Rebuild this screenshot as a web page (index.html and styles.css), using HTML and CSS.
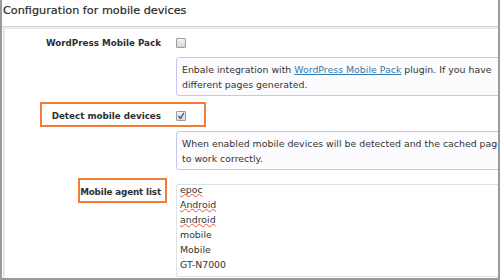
FILE: index.html
```html
<!DOCTYPE html>
<html>
<head>
<meta charset="utf-8">
<link rel="stylesheet" href="styles.css">
</head>
<body>
<div class="frame">
  <div class="title">Configuration for mobile devices</div>
  <div class="sep"></div>
  <div class="panel">
    <div class="label row-a">WordPress Mobile Pack</div>
    <div class="ctrl row-a"><span class="cb"></span></div>

    <div class="ctrl row-b">
      <div class="desc">Enbale integration with <a href="#">WordPress Mobile Pack</a> plugin. If you have<br>different pages generated.</div>
    </div>

    <div class="label row-c">Detect mobile devices</div>
    <div class="ctrl row-c"><span class="cb checked"><svg viewBox="0 0 10 10" width="10" height="10"><path d="M2.6 5.2 L4.4 7.3 L7.6 2.4" fill="none" stroke="#3b4c86" stroke-width="1.3" stroke-linecap="round" stroke-linejoin="round"/></svg></span></div>

    <div class="ctrl row-d">
      <div class="desc">When enabled mobile devices will be detected and the cached pages<br>to work correctly.</div>
    </div>

    <div class="label row-e tight">Mobile agent list</div>
    <div class="ctrl row-e">
      <div class="agents">
        <div class="agents-inner">
          <div><span class="sp">epoc</span></div>
          <div><span class="sp">Android</span></div>
          <div><span class="sp">android</span></div>
          <div>mobile</div>
          <div>Mobile</div>
          <div>GT-N7000</div>
        </div>
      </div>
    </div>

    <div class="hl hl-1"></div>
    <div class="hl hl-2"></div>
  </div>
</div>
</body>
</html>
```
FILE: styles.css
```css
html, body {
  margin: 0;
  padding: 0;
  background: #fff;
}
body {
  width: 500px;
  height: 280px;
  font-family: "DejaVu Sans", Verdana, sans-serif;
  color: #333;
}
.frame {
  width: 500px;
  height: 280px;
  box-sizing: border-box;
  border: 2px solid #9a9a9a;
  border-top: none;
  overflow: hidden;
  display: flex;
  flex-direction: column;
}
.title {
  height: 26px;
  line-height: 22px;
  padding-left: 1px;
  font-size: 11.25px;
  color: #2a2a2a;
  white-space: nowrap;
  -webkit-text-stroke: 0.2px #2a2a2a;
}
.sep {
  height: 2px;
  border-top: 1px solid #d6d6d6;
  background: #ececec;
  flex: none;
}
.panel {
  position: relative;
  flex: 1;
  margin-left: 1px;
  border-left: 1px solid #dcdcdc;
  box-shadow: inset 1px 0 0 #eeeeee;
  padding-top: 7px;
  display: grid;
  grid-template-columns: 172px 1fr;
  align-content: start;
}
.label {
  grid-column: 1;
  text-align: right;
  padding-right: 15px;
  font-weight: bold;
  font-size: 8.75px;
  color: #2e2e2e;
  white-space: nowrap;
}
.label.tight {
  letter-spacing: -0.12px;
}
.ctrl {
  grid-column: 2;
  min-width: 0;
}
.row-a { grid-row: 1; height: 14px; line-height: 14px; display: flex; align-items: center; }
.label.row-a { justify-content: flex-end; }
.row-b { grid-row: 2; margin-top: 7px; }
.row-c { grid-row: 3; margin-top: 13px; height: 14px; line-height: 14px; display: flex; align-items: center; }
.label.row-c { justify-content: flex-end; }
.row-d { grid-row: 4; margin-top: 8px; }
.row-e { grid-row: 5; margin-top: 14px; }
.label.row-e { line-height: 15px; padding-top: 1px; }
.cb {
  display: inline-block;
  width: 10px;
  height: 10px;
  box-sizing: border-box;
  border: 1px solid #9c9c9c;
  border-radius: 1px;
  background: linear-gradient(#f4f4f4, #d6d6d6);
  position: relative;
}
.cb svg {
  position: absolute;
  left: -1px;
  top: -1px;
}
.desc {
  width: 360px;
  box-sizing: border-box;
  border: 1px solid #c6c6ee;
  border-radius: 3px;
  background: #fcfcff;
  padding: 4px 5px 3px;
  font-size: 9.4px;
  line-height: 15px;
  color: #333;
  white-space: nowrap;
  overflow: hidden;
}
.desc a {
  color: #2f7ab0;
  text-decoration: underline;
}
.agents {
  width: 360px;
  height: 93px;
  box-sizing: border-box;
  border: 1px solid #dbe3ea;
  border-radius: 2px;
  padding-left: 3px;
  overflow: hidden;
  font-size: 9.4px;
  line-height: 15px;
  color: #333;
}
.agents-inner {
  margin-top: -3px;
}
.sp {
  text-decoration: underline wavy #e8503c;
  text-decoration-thickness: 1px;
  text-underline-offset: 0px;
  text-decoration-skip-ink: none;
}
.hl {
  position: absolute;
  box-sizing: border-box;
  border: 2px solid #f47b35;
}
.hl-1 {
  left: 36px;
  top: 73px;
  width: 166px;
  height: 25px;
}
.hl-2 {
  left: 74px;
  top: 149px;
  width: 89px;
  height: 25px;
}
```
